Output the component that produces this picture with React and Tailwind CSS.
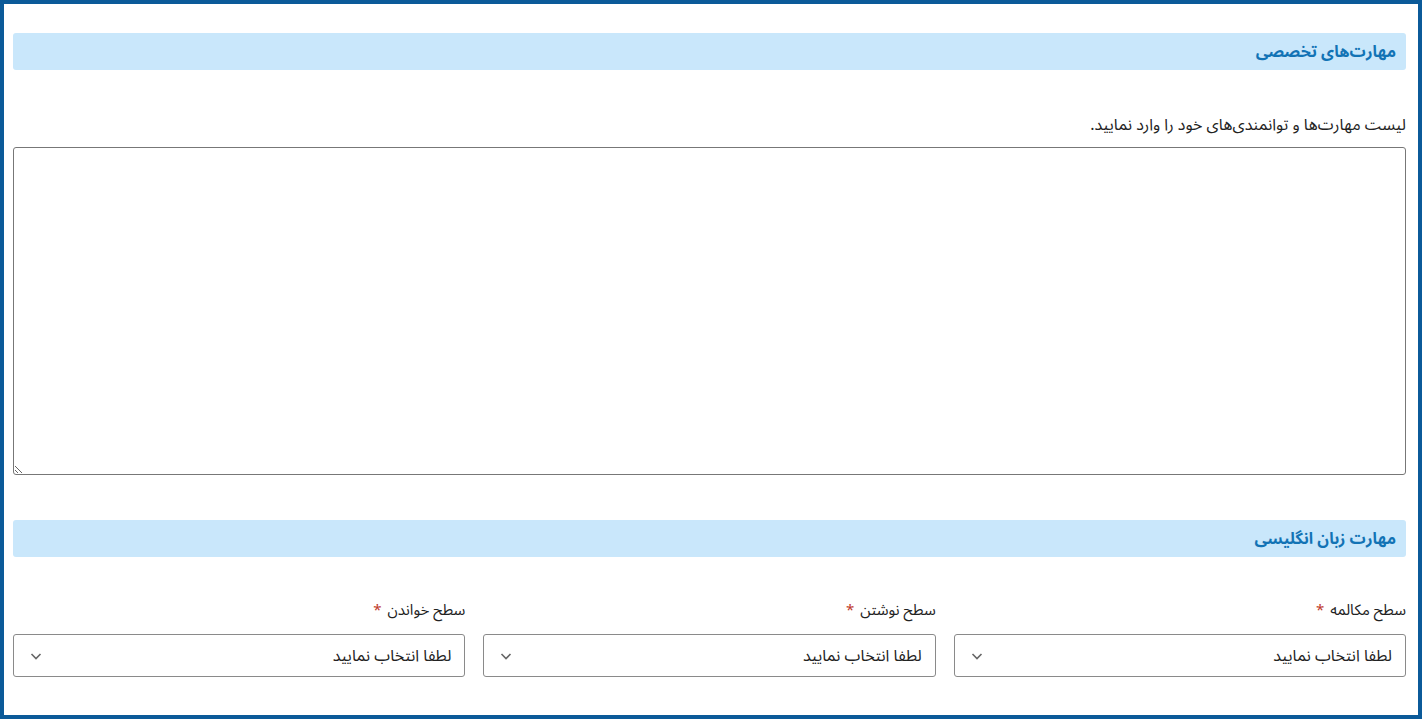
import React from 'react';

const font = { fontFamily: '"Noto Sans Arabic", "Vazirmatn", "DejaVu Sans", "Noto Sans", sans-serif' };

function SectionHeader({ title }) {
  return (
    <div className="h-[37px] rounded-[3px] bg-[#c9e7fb] flex items-center px-[10px]">
      <h2 className="text-[16px] font-bold text-[#1273b5]">{title}</h2>
    </div>
  );
}

function SelectField({ label }) {
  return (
    <div className="flex flex-col">
      <label className="text-[15px] text-[#222] h-[24px] flex items-center mb-[12px]">
        {label}
        <span className="text-[#c0392b] mr-[6px]">*</span>
      </label>
      <div className="h-[43px] border border-[#8a8a8a] rounded-[3px] flex items-center justify-between pr-[13px] pl-[12px] bg-white">
        <span className="text-[16px] text-[#222]">لطفا انتخاب نمایید</span>
        <svg width="14" height="14" viewBox="0 0 14 14" className="ml-[3px]">
          <path d="M2.5 5l4.5 4.5 4.5-4.5" fill="none" stroke="#666" strokeWidth="1.6" />
        </svg>
      </div>
    </div>
  );
}

export default function App() {
  return (
    <div dir="rtl" style={font} className="w-[1422px] h-[719px] bg-white">
      <div className="h-full border-[4px] border-[#0b5a99] pt-[29px] pr-[12px] pl-[9px]">
        <SectionHeader title="مهارت‌های تخصصی" />

        <p className="text-[16px] text-[#222] mt-[43px] h-[24px] flex items-center">
          لیست مهارت‌ها و توانمندی‌های خود را وارد نمایید.
        </p>
        <textarea className="block w-full h-[328px] mt-[10px] border border-[#777] rounded-[3px] resize-y outline-none" />

        <div className="mt-[45px]">
          <SectionHeader title="مهارت زبان انگلیسی" />
        </div>

        <div className="grid grid-cols-3 gap-[18px] mt-[41px]">
          <SelectField label="سطح مکالمه" />
          <SelectField label="سطح نوشتن" />
          <SelectField label="سطح خواندن" />
        </div>
      </div>
    </div>
  );
}
